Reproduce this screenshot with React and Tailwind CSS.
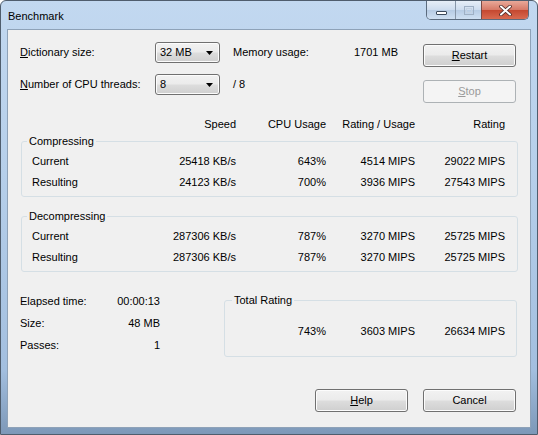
const btn =
  'flex h-[23px] w-[93px] items-center justify-center rounded-[3px] border border-[#707070] bg-[linear-gradient(180deg,#f2f2f2_0%,#ebebeb_48%,#dddddd_52%,#cfcfcf_100%)] shadow-[inset_0_0_0_1px_#fcfcfc] text-black'
const btnOff =
  'flex h-[23px] w-[93px] items-center justify-center rounded-[3px] border border-[#adb2b5] bg-[#f4f4f4] text-[#9a9a9a]'
const combo =
  'flex h-[21px] w-[65px] items-center justify-between rounded-[3px] border border-[#707070] bg-[linear-gradient(180deg,#f2f2f2_0%,#ebebeb_48%,#dddddd_52%,#cfcfcf_100%)] shadow-[inset_0_0_0_1px_#fcfcfc] pl-[4px] pr-[6px]'

const compress = [
  ['Current', '25418 KB/s', '643%', '4514 MIPS', '29022 MIPS'],
  ['Resulting', '24123 KB/s', '700%', '3936 MIPS', '27543 MIPS'],
]
const decompress = [
  ['Current', '287306 KB/s', '787%', '3270 MIPS', '25725 MIPS'],
  ['Resulting', '287306 KB/s', '787%', '3270 MIPS', '25725 MIPS'],
]

function Arrow() {
  return (
    <svg width="7" height="4" viewBox="0 0 7 4">
      <path d="M0 0h7L3.5 4z" fill="#000" />
    </svg>
  )
}

function Combo({ value }) {
  return (
    <div className={combo}>
      <span>{value}</span>
      <Arrow />
    </div>
  )
}

function Row({ cells }) {
  return (
    <div className="grid grid-cols-[114px_90px_90px_89px_90px]">
      {cells.map((c, i) => (
        <span key={i} className={i === 0 ? '' : 'text-right'}>{c}</span>
      ))}
    </div>
  )
}

function Group({ title, rows, mt }) {
  return (
    <fieldset className={`${mt} ml-[13px] w-[497px] rounded-[3px] border border-[#d5dfe5] pb-[7px]`}>
      <legend className="ml-[5px] px-[2px] leading-[13px]">{title}</legend>
      <div className="mt-[7px] flex flex-col gap-[8px] pl-[10px]">
        {rows.map(r => <Row key={r[0]} cells={r} />)}
      </div>
    </fieldset>
  )
}

function CaptionButtons() {
  return (
    <div className="ml-auto mr-[8px] flex h-[19px] overflow-hidden rounded-b-[5px] border border-t-0 border-[#5b6b7e]">
      <div className="flex w-[28px] items-end justify-center bg-[linear-gradient(180deg,#e6eef7_0%,#cddcee_50%,#b6cbe4_50%,#cfe0f2_100%)] pb-[4px]">
        <svg width="11" height="4" viewBox="0 0 11 4">
          <rect x="0.5" y="0.5" width="10" height="3" rx="0.5" fill="#fff" stroke="#3c4a5c" />
        </svg>
      </div>
      <div className="flex w-[26px] items-center justify-center border-l border-[#8796a8] bg-[linear-gradient(180deg,#e6eef7_0%,#cddcee_50%,#b6cbe4_50%,#cfe0f2_100%)]">
        <svg width="10" height="9" viewBox="0 0 10 9">
          <rect x="0.5" y="0.5" width="9" height="8" fill="none" stroke="#9fb0c4" />
          <rect x="2.5" y="2.5" width="5" height="4" fill="none" stroke="#c4d2e2" />
        </svg>
      </div>
      <div className="flex w-[47px] items-center justify-center border-l border-[#7c4a44] bg-[linear-gradient(180deg,#e9a999_0%,#d67866_50%,#c4472f_50%,#d86a50_100%)]">
        <svg width="13" height="11" viewBox="0 0 13 11">
          <path d="M2 1.5l9 8M11 1.5l-9 8" stroke="#4a2a28" strokeWidth="3.6" strokeLinecap="round" />
          <path d="M2 1.5l9 8M11 1.5l-9 8" stroke="#fff" strokeWidth="2" strokeLinecap="round" />
        </svg>
      </div>
    </div>
  )
}

export default function App() {
  return (
    <div className="h-[435px] w-[538px] overflow-hidden rounded-t-[6px] border border-[#4f5d6d] bg-[linear-gradient(180deg,#c2d8f0_0%,#b6cfea_40%,#a3bfdf_85%,#7d98b8_100%)] font-['Liberation_Sans',Arial,sans-serif] text-[11px] leading-[13px] text-black">
      <div className="flex h-[28px] items-start">
        <span className="pl-[7px] pt-[9px]">Benchmark</span>
        <CaptionButtons />
      </div>

      <div className="ml-[6px] h-[399px] w-[524px] border border-[#8ea2b8] bg-[#f0f0f0]">
        {/* settings */}
        <div className="flex pl-[12px]">
          <div className="flex flex-col gap-[11px] pt-[12px]">
            <div className="flex items-center">
              <span className="w-[135px]"><u>D</u>ictionary size:</span>
              <Combo value="32 MB" />
              <span className="ml-[13px] w-[120px]">Memory usage:</span>
              <span className="w-[45px] text-right">1701 MB</span>
            </div>
            <div className="flex items-center">
              <span className="w-[135px]"><u>N</u>umber of CPU threads:</span>
              <Combo value="8" />
              <span className="ml-[13px]">/ 8</span>
            </div>
          </div>
          <div className="ml-[25px] flex flex-col gap-[13px] pt-[14px]">
            <button className={btn}><span><u>R</u>estart</span></button>
            <button className={btnOff} disabled><span><u>S</u>top</span></button>
          </div>
        </div>

        {/* results */}
        <div className="mt-[15px] pl-[24px]">
          <Row cells={['', 'Speed', 'CPU Usage', 'Rating / Usage', 'Rating']} />
        </div>
        <Group title="Compressing" rows={compress} mt="mt-[4px]" />
        <Group title="Decompressing" rows={decompress} mt="mt-[13px]" />

        {/* totals */}
        <div className="mt-[21px] flex items-start pl-[12px]">
          <div className="flex flex-col gap-[9px] pt-[2px]">
            {[['Elapsed time:', '00:00:13'], ['Size:', '48 MB'], ['Passes:', '1']].map(([k, v]) => (
              <div key={k} className="flex">
                <span className="w-[90px]">{k}</span>
                <span className="w-[50px] text-right">{v}</span>
              </div>
            ))}
          </div>
          <fieldset className="ml-[64px] mt-[1px] w-[293px] rounded-[3px] border border-[#d5dfe5] pb-[18px]">
            <legend className="ml-[7px] px-[2px] leading-[13px]">Total Rating</legend>
            <div className="mt-[18px] grid grid-cols-[101px_89px_90px]">
              <span className="text-right">743%</span>
              <span className="text-right">3603 MIPS</span>
              <span className="text-right">26634 MIPS</span>
            </div>
          </fieldset>
        </div>

        <div className="mt-[32px] flex justify-end gap-[15px] pr-[14px]">
          <button className={btn}><span><u>H</u>elp</span></button>
          <button className={btn}>Cancel</button>
        </div>
      </div>
    </div>
  )
}
